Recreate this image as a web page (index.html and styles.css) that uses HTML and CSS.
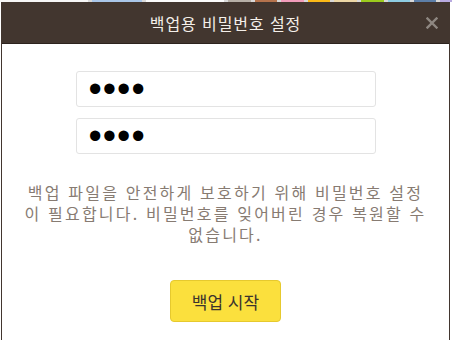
FILE: index.html
```html
<!DOCTYPE html>
<html lang="ko">
<head>
  <meta charset="UTF-8">
  <meta name="viewport" content="width=device-width, initial-scale=1.0">
  <title>백업용 비밀번호 설정</title>
  <link rel="stylesheet" href="styles.css">
</head>
<body>
  <!-- palette behind the dialog, only its bottom edge shows -->
  <div class="palette">
    <span class="sw" style="width: 88px; background: #f6f6f6"></span>
    <span class="sw" style="width: 50px; background: #a9c6e8"></span>
    <span class="sw" style="width: 78px; background: #fbfbfb"></span>
    <span class="sw" style="width: 23px; background: #b6afa6"></span>
    <span class="sw" style="width: 22px; background: #b5734d"></span>
    <span class="sw" style="width: 23px; background: #f29cba"></span>
    <span class="sw" style="width: 22px; background: #fbb917"></span>
    <span class="sw" style="width: 23px; background: #ecd7a6"></span>
    <span class="sw" style="width: 23px; background: #9ccb1d"></span>
    <span class="sw" style="width: 22px; background: #8ecde2"></span>
    <span class="sw" style="width: 22px; background: #5d7fa8"></span>
    <span class="sw" style="width: 16px; background: #b8aae0"></span>
  </div>

  <div class="dialog">
    <div class="dialog-header">
      <h2>백업용 비밀번호 설정</h2>
      <button class="close" aria-label="닫기">
        <svg width="12" height="12" viewBox="0 0 12 12">
          <path d="M1.5 1.5 L10.5 10.5 M10.5 1.5 L1.5 10.5" stroke="currentColor" stroke-width="2.4" stroke-linecap="square"/>
        </svg>
      </button>
    </div>
    <div class="dialog-body">
      <input type="password" class="field" value="abcd">
      <input type="password" class="field" value="abcd">
      <p class="notice">백업 파일을 안전하게 보호하기 위해 비밀번호 설정이 필요합니다. 비밀번호를 잊어버린 경우 복원할 수 없습니다.</p>
      <button class="btn">백업 시작</button>
    </div>
  </div>
</body>
</html>
```

FILE: styles.css
```css
:root {
  --header-bg: #42362f;
  --header-line: #2c231e;
  --title: #f4efe9;
  --close: #8e8781;
  --muted: #877b72;
  --field-line: #e3e3e3;
  --yellow: #fbe03d;
  --yellow-line: #e6c92e;
  --font-family: "Noto Sans CJK KR", "Noto Sans", sans-serif;
}

body {
  margin: 0;
  background: #fff;
  font-family: var(--font-family);
}

.palette {
  display: flex;
  gap: 4px;
  height: 2px;
  overflow: hidden;
  background: #d9d9d9;
}

.sw {
  flex: none;
  height: 2px;
}

.dialog {
  width: 447px;
  margin-left: 1px;
  border: 1px solid var(--header-bg);
  border-top: none;
  background: #fff;
}

.dialog-header {
  position: relative;
  height: 41px;
  background: var(--header-bg);
  border-bottom: 1px solid var(--header-line);
  display: flex;
  align-items: center;
  justify-content: center;
}

.dialog-header h2 {
  margin: 0;
  font-size: 16px;
  font-weight: 400;
  color: var(--title);
  letter-spacing: 0.9px;
}

.close {
  position: absolute;
  right: 11px;
  top: 15px;
  padding: 0;
  border: none;
  background: none;
  color: var(--close);
  line-height: 0;
  cursor: pointer;
}

.dialog-body {
  display: flex;
  flex-direction: column;
  align-items: center;
  padding: 27px 21px 40px;
}

.field {
  box-sizing: border-box;
  width: 300px;
  height: 36px;
  margin-bottom: 11px;
  padding: 0 12px;
  border: 1px solid var(--field-line);
  border-radius: 3px;
  font-family: "Liberation Sans", sans-serif;
  font-size: 38px;
  letter-spacing: 1px;
  color: #000;
  outline: none;
}

.notice {
  margin: 17px 0 35px;
  font-size: 16px;
  line-height: 21px;
  letter-spacing: 2.2px;
  color: var(--muted);
  text-align: center;
  word-break: break-all;
}

.btn {
  width: 111px;
  height: 42px;
  border: 1px solid var(--yellow-line);
  border-radius: 4px;
  background: var(--yellow);
  color: #3b342d;
  font-family: var(--font-family);
  font-size: 17px;
  cursor: pointer;
}
```
